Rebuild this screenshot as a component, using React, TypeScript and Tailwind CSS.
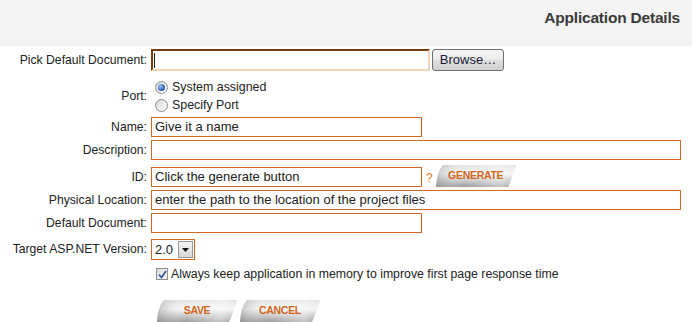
import React from "react";

const font = { fontFamily: '"Liberation Sans", Arial, sans-serif' };

function Label({ children, className = "" }: { children: React.ReactNode; className?: string }) {
  return (
    <div className={`w-[148px] shrink-0 pr-[1px] text-right text-[12.2px] text-[#222] ${className}`}>{children}</div>
  );
}

function TextBox({ width, value = "" }: { width: string; value?: string }) {
  return (
    <div
      className={`${width} h-[20px] ml-[3px] border border-[#d2691e] bg-white pl-[3px] text-[13px] leading-[18px] text-[#222] whitespace-nowrap overflow-hidden`}
    >
      {value}
    </div>
  );
}

function Radio({ checked }: { checked?: boolean }) {
  return (
    <span className="flex h-[13px] w-[13px] items-center justify-center rounded-full border border-[#8a8a8a] bg-[linear-gradient(135deg,#d6d6d6,#ffffff)]">
      {checked && (
        <span className="h-[7px] w-[7px] rounded-full bg-[radial-gradient(circle_at_35%_35%,#9cc4f2,#1f56b0_70%)]" />
      )}
    </span>
  );
}

function SlantButton({ label, width }: { label: string; width: number }) {
  const id = `g-${label}`;
  return (
    <button className="relative h-[22px] shrink-0" style={{ width }}>
      <svg className="absolute inset-0" width={width} height={22} viewBox={`0 0 ${width} 22`}>
        <defs>
          <linearGradient id={id} x1="0" y1="0" x2="0" y2="1">
            <stop offset="0" stopColor="#e2e2e2" />
            <stop offset="0.4" stopColor="#f6f6f6" />
            <stop offset="0.75" stopColor="#c4c4c4" />
            <stop offset="1" stopColor="#9a9a9a" />
          </linearGradient>
          <linearGradient id={`${id}-h`} x1="0" y1="0" x2="1" y2="0">
            <stop offset="0" stopColor="#8a8a8a" stopOpacity="0.45" />
            <stop offset="0.35" stopColor="#ffffff" stopOpacity="0" />
            <stop offset="0.8" stopColor="#ffffff" stopOpacity="0.4" />
            <stop offset="1" stopColor="#ffffff" stopOpacity="0" />
          </linearGradient>
        </defs>
        <path d={`M7 0 H${width} Q${width - 4} 14 ${width - 8} 22 H0 Q1 6 7 0 Z`} fill={`url(#${id})`} />
        <path d={`M7 0 H${width} Q${width - 4} 14 ${width - 8} 22 H0 Q1 6 7 0 Z`} fill={`url(#${id}-h)`} />
      </svg>
      <span className="relative flex h-full items-center justify-center text-[10.5px] font-bold tracking-[-0.3px] text-[#d2661c]">
        {label}
      </span>
    </button>
  );
}

export default function App() {
  return (
    <div className="h-[322px] w-[692px] overflow-hidden bg-white" style={font}>
      <div className="flex h-[46px] justify-end bg-[#f4f4f4] pr-[12px] pt-[6px]">
        <h1 className="text-[15.5px] font-bold tracking-[-0.2px] text-[#3a3a3a]">Application Details</h1>
      </div>

      <div className="flex flex-col pt-[3px]">
        <div className="flex h-[22px] items-center">
          <Label>Pick Default Document:</Label>
          <div className="ml-[3px] flex h-[22px] w-[279px] items-center border-2 border-t-[#7a3a10] border-l-[#7a3a10] border-b-[#f4d4b6] border-r-[#f4d4b6] bg-white pl-[1px]">
            <span className="h-[15px] w-[1px] bg-[#222]" />
          </div>
          <button className="ml-[2px] h-[22px] w-[72px] rounded-[3px] border border-[#707070] bg-[linear-gradient(#f4f4f4_0%,#ececec_48%,#dedede_52%,#d0d0d0_100%)] text-[13px] text-[#1b1b3b]">
            Browse…
          </button>
        </div>

        <div className="mt-[7px] flex items-center">
          <Label>Port:</Label>
          <div className="ml-[7px] flex flex-col text-[12.4px] text-[#222]">
            <label className="flex h-[18px] items-center gap-[4px]">
              <Radio checked />
              System assigned
            </label>
            <label className="flex h-[18px] items-center gap-[4px]">
              <Radio />
              Specify Port
            </label>
          </div>
        </div>

        <div className="mt-[3px] flex items-center">
          <Label>Name:</Label>
          <TextBox width="w-[271px]" value="Give it a name" />
        </div>

        <div className="mt-[3px] flex items-center">
          <Label>Description:</Label>
          <TextBox width="w-[530px]" />
        </div>

        <div className="mt-[2px] flex items-start">
          <Label className="pt-[6px]">ID:</Label>
          <div className="mt-[5px] flex">
            <TextBox width="w-[271px]" value="Click the generate button" />
          </div>
          <span className="ml-[4px] mt-[9px] text-[12px] leading-[14px] text-[#e07a26]">?</span>
          <div className="ml-[3px]">
            <SlantButton label="GENERATE" width={80} />
          </div>
        </div>

        <div className="mt-[3px] flex items-center">
          <Label>Physical Location:</Label>
          <TextBox width="w-[530px]" value="enter the path to the location of the project files" />
        </div>

        <div className="mt-[3px] flex items-center">
          <Label>Default Document:</Label>
          <TextBox width="w-[271px]" />
        </div>

        <div className="mt-[6px] flex items-center">
          <Label>Target ASP.NET Version:</Label>
          <div className="ml-[3px] flex h-[21px] w-[44px] items-center border border-[#d2691e] bg-white pl-[3px] text-[13px] text-[#222]">
            <span className="flex-1">2.0</span>
            <span className="mr-[1px] flex h-[17px] w-[15px] items-center justify-center border border-[#9a9a9a] bg-[linear-gradient(#f4f4f4,#d8d8d8)]">
              <svg width="7" height="4" viewBox="0 0 7 4">
                <path d="M0 0 H7 L3.5 4 Z" fill="#111" />
              </svg>
            </span>
          </div>
        </div>

        <div className="mt-[6px] flex h-[16px] items-center pl-[156px] text-[12.3px] text-[#222]">
          <span className="mr-[3px] flex h-[12px] w-[12px] items-center justify-center border border-[#8f8f8f] bg-[linear-gradient(135deg,#d8d8d8,#ffffff)]">
            <svg width="9" height="9" viewBox="0 0 9 9">
              <path d="M1 4.5 L3.5 7.5 L8 1" fill="none" stroke="#3a5fa8" strokeWidth="1.8" />
            </svg>
          </span>
          Always keep application in memory to improve first page response time
        </div>

        <div className="mt-[18px] flex gap-[3px] pl-[157px]">
          <SlantButton label="SAVE" width={80} />
          <SlantButton label="CANCEL" width={80} />
        </div>
      </div>
    </div>
  );
}
